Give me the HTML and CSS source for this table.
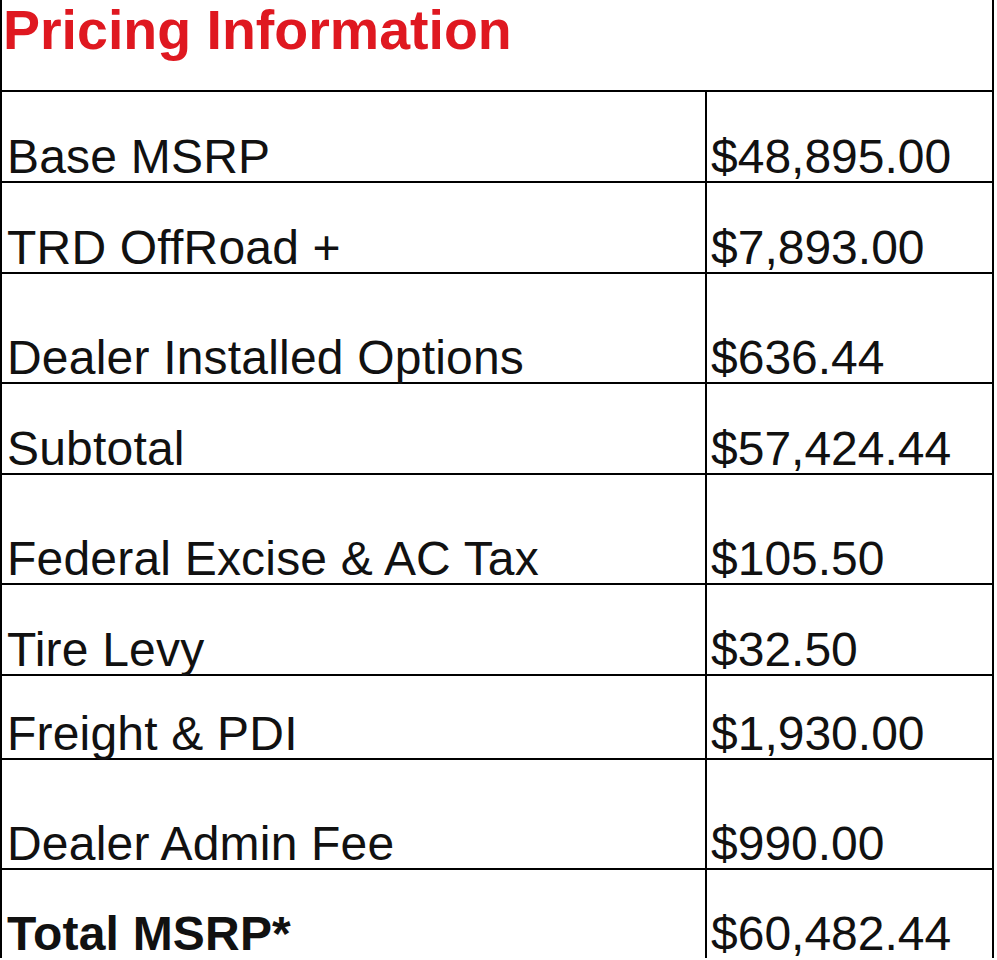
FILE: index.html
```html
<!DOCTYPE html>
<html lang="en">
<head>
<meta charset="utf-8">
<title>Pricing Information</title>
<link rel="stylesheet" href="styles.css">
</head>
<body>
<div class="sheet">
  <div class="title">Pricing Information</div>
  <div class="row"><div class="label">Base MSRP</div><div class="value">$48,895.00</div></div>
  <div class="row"><div class="label">TRD OffRoad +</div><div class="value">$7,893.00</div></div>
  <div class="row tall"><div class="label">Dealer Installed Options</div><div class="value">$636.44</div></div>
  <div class="row"><div class="label">Subtotal</div><div class="value">$57,424.44</div></div>
  <div class="row tall"><div class="label">Federal Excise &amp; AC Tax</div><div class="value">$105.50</div></div>
  <div class="row"><div class="label">Tire Levy</div><div class="value">$32.50</div></div>
  <div class="row short"><div class="label">Freight &amp; PDI</div><div class="value">$1,930.00</div></div>
  <div class="row tall"><div class="label">Dealer Admin Fee</div><div class="value">$990.00</div></div>
  <div class="row last"><div class="label strong">Total MSRP*</div><div class="value">$60,482.44</div></div>
</div>
</body>
</html>
```
FILE: styles.css
```css
html, body {
  margin: 0;
  padding: 0;
  background: #fff;
}

.sheet {
  width: 994px;
  box-sizing: border-box;
  border-left: 2px solid #000;
  border-right: 2px solid #000;
  font-family: "Liberation Sans", Arial, sans-serif;
  color: #111;
}

.title {
  height: 87px;
  padding-top: 3px;
  padding-left: 1px;
  border-bottom: 2px solid #000;
  color: #df1820;
  font-weight: bold;
  font-size: 55.5px;
  line-height: 55px;
  white-space: nowrap;
}

.row {
  display: grid;
  grid-template-columns: 703px 1fr;
  height: 89px;
  border-bottom: 2px solid #000;
  font-size: 48px;
  line-height: 48px;
}

.row.tall { height: 108px; }
.row.short { height: 82px; }
.row.last { height: 88px; border-bottom: none; }

.label,
.value {
  display: flex;
  align-items: flex-end;
  white-space: nowrap;
}

.label {
  padding-left: 5px;
  letter-spacing: 0.2px;
}

.value {
  border-left: 2px solid #000;
  padding-left: 4px;
}

.strong { font-weight: bold; }
```
